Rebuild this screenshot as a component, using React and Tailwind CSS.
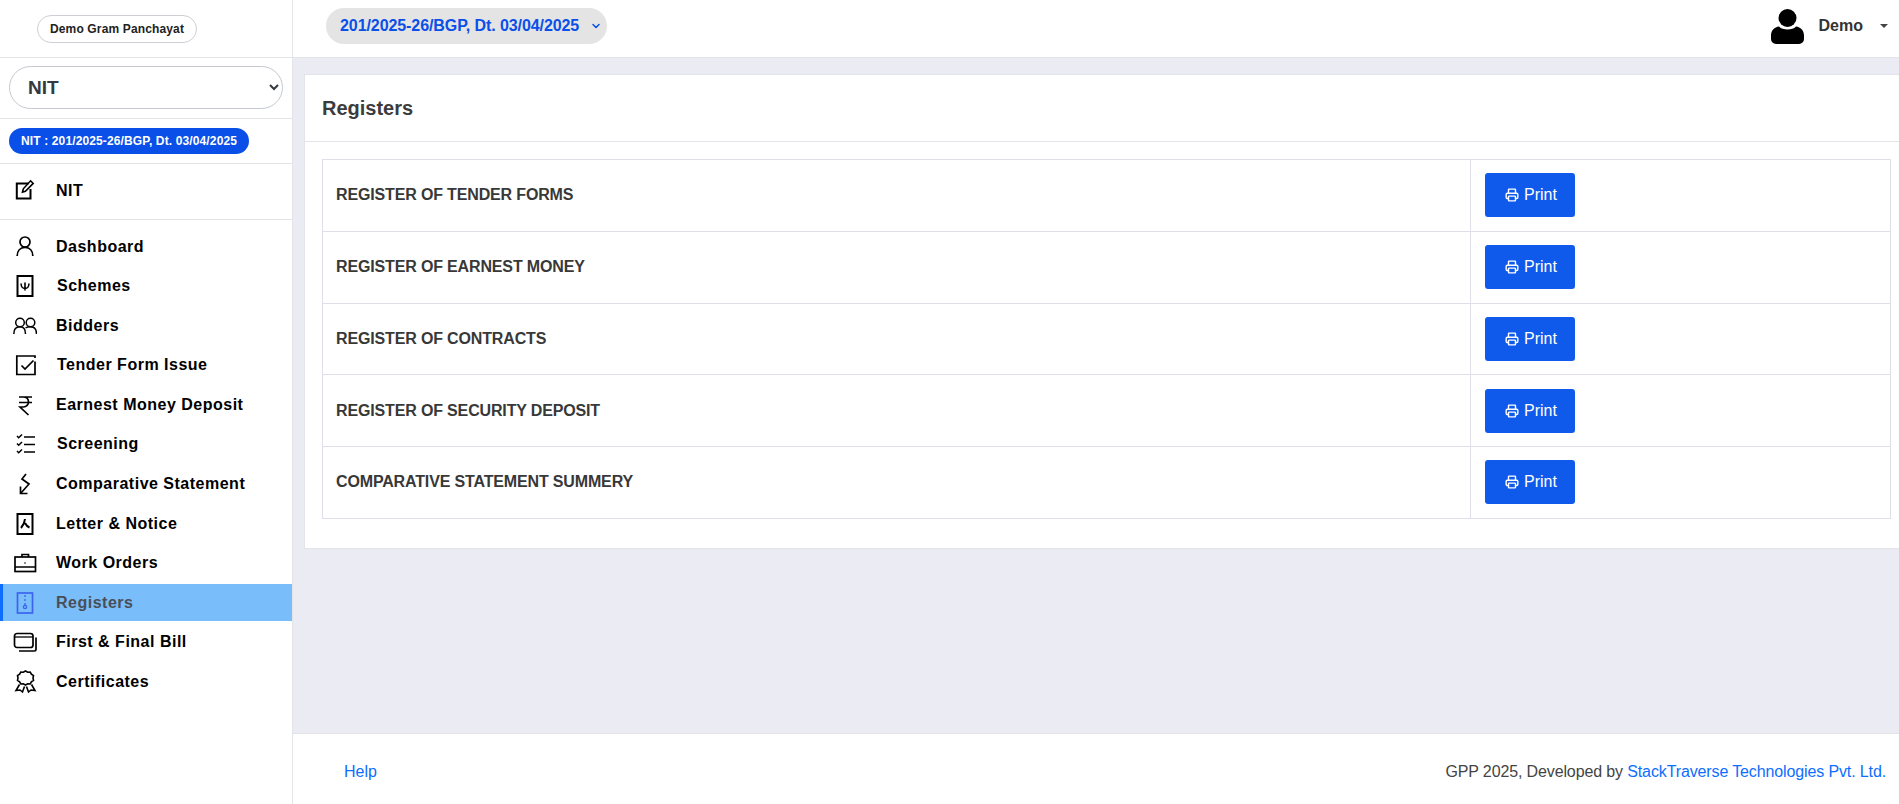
import { ChevronDown, Printer } from "lucide-react";

const Icon = ({ children, className = "text-black" }) => (
  <svg
    viewBox="0 0 24 24"
    fill="none"
    stroke="currentColor"
    strokeWidth="1.7"
    className={`h-6 w-6 shrink-0 ${className}`}
  >
    {children}
  </svg>
);

const icons = {
  nit: (
    <Icon>
      <path d="M15.500 4.500H3.800v15h13.700V10" strokeWidth="2" />
      <path d="M9.500 13l.8-3.200L17.600 1.800l2.600 2.600-7.800 7.800z" strokeWidth="1.600" />
    </Icon>
  ),
  dashboard: (
    <Icon>
      <circle cx="12" cy="7" r="5" />
      <path d="M4.200 21c0-5 3-8.600 7.800-8.600s7.800 3.600 7.800 8.600" />
    </Icon>
  ),
  schemes: (
    <Icon>
      <rect x="4.500" y="2" width="15" height="20" strokeWidth="2" />
      <path d="M8 9.500c.3 3.500 1 5 4 5s3.700-1.500 4-5M12 8.500v8" strokeWidth="1.600" />
    </Icon>
  ),
  bidders: (
    <Icon>
      <circle cx="7" cy="8.500" r="4.300" strokeWidth="1.500" />
      <circle cx="17.500" cy="8.500" r="4.300" strokeWidth="1.500" />
      <path d="M.8 20c0-4.500 2.500-7.200 6.200-7.200s5.500 2.700 5.500 7.200M12.500 14c1.200-.8 3-1.200 5-1.200 3.700 0 6 2.700 6 7.200" strokeWidth="1.500" />
    </Icon>
  ),
  tender: (
    <Icon>
      <path d="M22 5V3H3.800v18.500H22V8.500" strokeWidth="1.700" />
      <path d="M8.500 12.500l3.500 3.500 8.500-8.500" strokeWidth="1.700" />
    </Icon>
  ),
  rupee: (
    <Icon>
      <path d="M6 4h13M6 9.500h13M10 4c4 0 5.500 2.500 5.500 5s-2 5-5 5H7l8.500 8" strokeWidth="1.700" />
    </Icon>
  ),
  screening: (
    <Icon>
      <path d="M11 5h11M11 12.500h11M11 20h11" />
      <path d="M4 4l1.700 1.700L9 2.500M4 11.500l1.700 1.700L9 10M4 19l1.700 1.700L9 17.500" strokeWidth="1.500" />
    </Icon>
  ),
  comparative: (
    <Icon>
      <path d="M13 2l-4 5 7 5-8 9" />
      <path d="M7.500 14.500v7h7" />
    </Icon>
  ),
  letter: (
    <Icon>
      <rect x="4.500" y="2" width="15" height="20" strokeWidth="2" />
      <path d="M12 7c-.3 3.500-1 5.500-4 9M12 11c1 2 2 3.500 4.500 4.500" strokeWidth="2" />
    </Icon>
  ),
  work: (
    <Icon>
      <rect x="2" y="6" width="20.500" height="14.500" />
      <path d="M2 16h20.500M9 6V3.500h6.500V6" />
      <circle cx="12" cy="12" r=".8" fill="currentColor" stroke="none" />
    </Icon>
  ),
  registers: (
    <Icon className="text-[#3d63ee]">
      <rect x="4.500" y="2" width="15" height="20" />
      <path d="M12 4v2M12 8v2M12 12v2" strokeWidth="1.300" />
      <circle cx="12" cy="16" r="1.600" strokeWidth="1.300" />
    </Icon>
  ),
  bill: (
    <Icon>
      <rect x="1.500" y="3.500" width="18.500" height="14" rx="2.500" />
      <path d="M23 7.500v12a1.500 1.500 0 0 1-1.500 1.500H6" />
      <path d="M1.500 7h18.500" strokeWidth="1.300" />
    </Icon>
  ),
  certificates: (
    <Icon>
      <path
        d="M12.500 1l2.200 1.200 2.500-.2 1.200 2.200 2.100 1.400-.5 2.400.5 2.400-2.100 1.400-1.200 2.200-2.500-.2-2.200 1.200-2.200-1.200-2.500.2-1.200-2.200-2.100-1.400.5-2.400-.5-2.400 2.100-1.400 1.200-2.200 2.500.2z"
        strokeWidth="1.600"
      />
      <path d="M6.500 14.500L3 20.500l4-.5 2.500 2 2-5.500M18.500 14.500l3.500 6-4-.5-2.500 2-2-5.500" strokeWidth="1.600" />
    </Icon>
  ),
};

const navItems = [
  { label: "Dashboard", icon: icons.dashboard },
  { label: "Schemes", icon: icons.schemes, nudge: true },
  { label: "Bidders", icon: icons.bidders },
  { label: "Tender Form Issue", icon: icons.tender, nudge: true },
  { label: "Earnest Money Deposit", icon: icons.rupee },
  { label: "Screening", icon: icons.screening, nudge: true },
  { label: "Comparative Statement", icon: icons.comparative },
  { label: "Letter & Notice", icon: icons.letter },
  { label: "Work Orders", icon: icons.work },
  { label: "Registers", icon: icons.registers, active: true },
  { label: "First & Final Bill", icon: icons.bill },
  { label: "Certificates", icon: icons.certificates },
];

const registers = [
  "REGISTER OF TENDER FORMS",
  "REGISTER OF EARNEST MONEY",
  "REGISTER OF CONTRACTS",
  "REGISTER OF SECURITY DEPOSIT",
  "COMPARATIVE STATEMENT SUMMERY",
];

function NavItem({ label, icon, active, nudge }) {
  return (
    <div
      className={`flex h-[37px] items-center text-[16px] font-bold tracking-[0.5px] ${
        active ? "border-l-[3px] border-[#0d6efd] bg-[#79bdfb] pl-[10px] text-[#4a4f57]" : "pl-[13px] text-black"
      }`}
    >
      {icon}
      <span className={nudge ? "ml-[20px]" : "ml-[19px]"}>{label}</span>
    </div>
  );
}

function Sidebar() {
  return (
    <aside className="flex h-full w-[293px] shrink-0 flex-col border-r border-[#e3e3e8] bg-white">
      <div className="flex h-[58px] shrink-0 items-center border-b border-[#e3e3e8] pl-[37px]">
        <span className="rounded-full border border-[#ccd0d5] px-[12px] py-[5px] text-[12px] leading-[16px] font-bold tracking-[0.14px] text-[#222]">
          Demo Gram Panchayat
        </span>
      </div>
      <div className="flex h-[61px] shrink-0 items-center border-b border-[#e3e3e8] px-[9px] pb-[2px]">
        <select className="h-[43px] w-[275px] rounded-full border border-[#c4c8ce] bg-white pl-[14px] text-[19px] font-bold text-[#343a40]">
          <option>NIT</option>
        </select>
      </div>
      <div className="flex h-[45px] shrink-0 items-center border-b border-[#e3e3e8] px-[9px]">
        <span className="rounded-full bg-[#0a4fe8] px-[12px] py-[5px] text-[12px] leading-[16px] font-bold tracking-[0.13px] text-white">
          NIT : 201/2025-26/BGP, Dt. 03/04/2025
        </span>
      </div>
      <div className="flex h-[56px] shrink-0 items-center border-b border-[#e3e3e8] pb-[1px] pl-[13px] text-[16px] font-bold tracking-[0.5px] text-black">
        {icons.nit}
        <span className="ml-[19px]">NIT</span>
      </div>
      <nav className="flex flex-col gap-[2.600px] pt-[8px]">
        {navItems.map((item) => (
          <NavItem key={item.label} {...item} />
        ))}
      </nav>
    </aside>
  );
}

function Topbar() {
  return (
    <header className="flex h-[58px] shrink-0 items-start justify-between border-b border-[#e3e3e8] bg-white pt-[8px] pr-[11px] pl-[33px]">
      <div className="relative">
        <select className="h-[36px] w-[281px] appearance-none rounded-full bg-[#e4e4e4] pl-[14px] text-[16px] font-bold tracking-[-0.08px] text-[#0a4fe8]">
          <option>201/2025-26/BGP, Dt. 03/04/2025</option>
        </select>
        <ChevronDown size={12} strokeWidth={3} className="absolute top-[12px] right-[5px] text-[#0a4fe8]" />
      </div>
      <div className="flex h-[36px] items-center">
        <svg viewBox="0 0 33 35" className="h-[35px] w-[33px] fill-black">
          <circle cx="16.500" cy="9" r="9" />
          <path d="M8 17.500c2 2.200 5 3 8.500 3s6.500-.8 8.500-3c4.500.5 8 4 8 9v3.500a5 5 0 0 1-5 5H5a5 5 0 0 1-5-5v-3.500c0-5 3.500-8.500 8-9z" />
        </svg>
        <span className="ml-[15px] text-[16px] font-bold text-[#333]">Demo</span>
        <span className="ml-[17px] h-0 w-0 border-x-[4px] border-t-[4px] border-x-transparent border-t-[#444]" />
      </div>
    </header>
  );
}

function RegisterRow({ title }) {
  return (
    <tr className="h-[71.750px]">
      <td className="border border-[#dfdfe9] pl-[13px] text-[16px] font-bold tracking-[-0.15px] text-[#383838]">{title}</td>
      <td className="border border-[#dfdfe9] pl-[14px]">
        <button className="flex h-[44px] w-[90px] items-center justify-center gap-[5px] rounded-[3px] bg-[#105aeb] pl-[2px] text-[16px] text-white">
          <Printer size={14} strokeWidth={2.4} />
          Print
        </button>
      </td>
    </tr>
  );
}

export default function App() {
  return (
    <div className="flex h-screen w-full overflow-hidden bg-white font-['Liberation_Sans',Arial,sans-serif]">
      <Sidebar />
      <div className="flex min-w-0 flex-1 flex-col">
        <Topbar />
        <main className="flex-1 bg-[#ebebf4] pt-[16px] pl-[11px]">
          <section className="border border-r-0 border-[#e3e3ea] bg-white">
            <div className="flex h-[67px] items-center border-b border-[#e3e3ea] pl-[17px]">
              <h1 className="text-[20px] font-bold text-[#3c3c3c]">Registers</h1>
            </div>
            <div className="pt-[17px] pr-[8px] pb-[29px] pl-[17px]">
              <table className="w-full border-collapse">
                <colgroup>
                  <col className="w-[1148px]" />
                  <col />
                </colgroup>
                <tbody>
                  {registers.map((title) => (
                    <RegisterRow key={title} title={title} />
                  ))}
                </tbody>
              </table>
            </div>
          </section>
        </main>
        <footer className="flex h-[71px] shrink-0 items-center justify-between border-t border-[#e3e3e8] bg-white pt-[6px] pr-[13px] pl-[51px] text-[16px] text-[#444]">
          <a className="text-[#0d6efd]">Help</a>
          <p className="tracking-[-0.125px]">
            GPP 2025, Developed by <a className="text-[#0d6efd]">StackTraverse Technologies Pvt. Ltd.</a>
          </p>
        </footer>
      </div>
    </div>
  );
}
